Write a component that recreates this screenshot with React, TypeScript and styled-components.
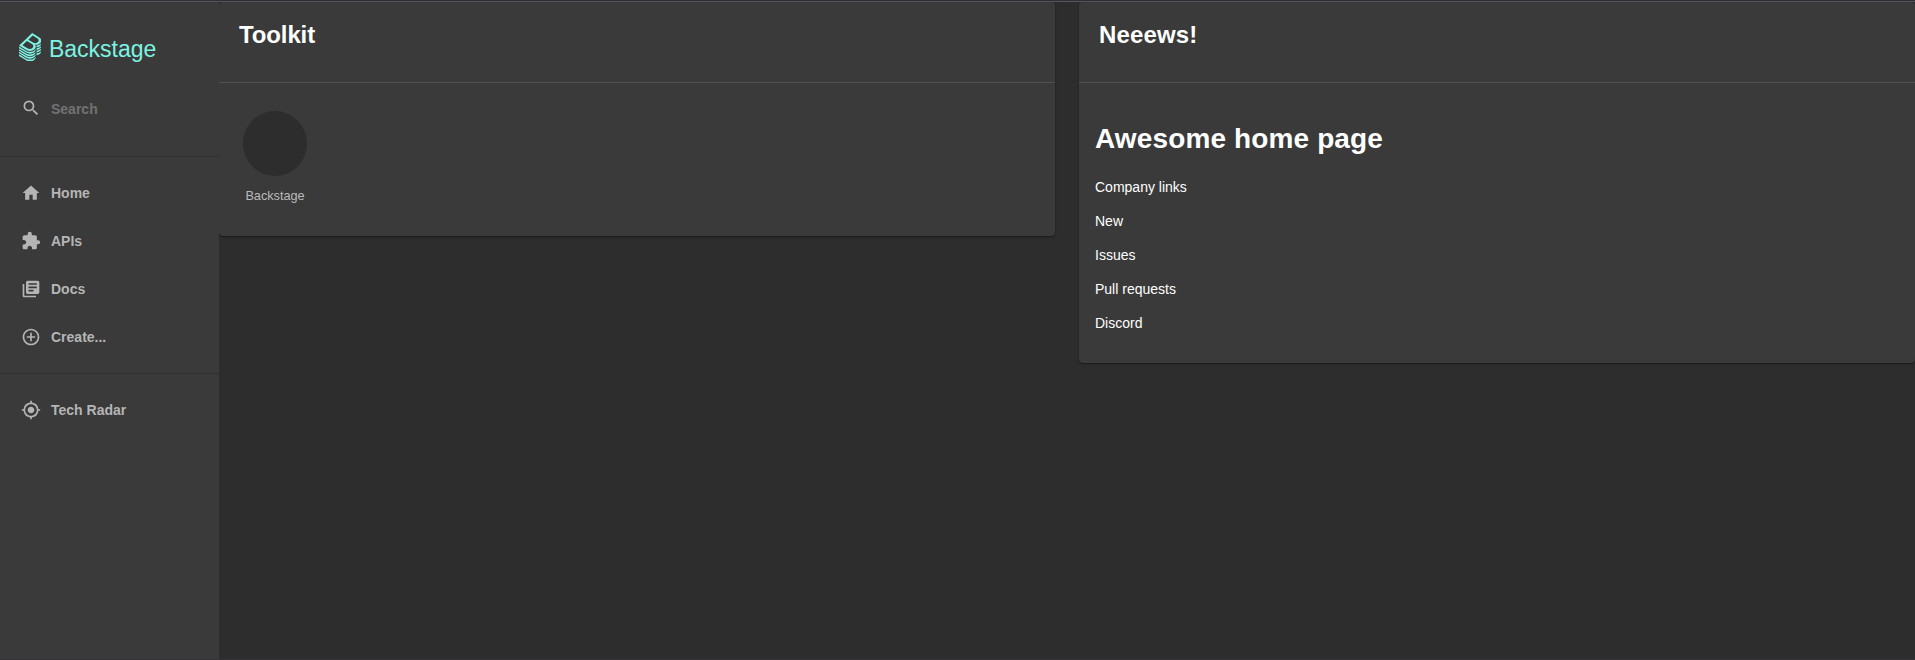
import React from 'react';
import styled, { createGlobalStyle } from 'styled-components';
import {
  MdAddCircleOutline,
  MdExtension,
  MdHome,
  MdLibraryBooks,
  MdMyLocation,
  MdSearch,
} from 'react-icons/md';

const GlobalStyle = createGlobalStyle`
  * { box-sizing: border-box; }
  body {
    margin: 0;
    background: #2d2d2d;
    color: #fff;
    font-family: "Liberation Sans", Arial, Helvetica, sans-serif;
    font-size: 14px;
    overflow: hidden;
  }
`;

const Page = styled.div`
  display: flex;
  height: 660px;
  border-top: 1px solid #302f35;
  border-bottom: 1px solid #383236;
  background: #2d2d2d;
`;

const Frame = styled.div`
  display: flex;
  flex: 1;
  border-top: 1px solid #545459;
`;

const Sidebar = styled.nav`
  display: flex;
  flex-direction: column;
  width: 219px;
  background: #3a3a3a;
  z-index: 1;
`;

const Brand = styled.div`
  display: flex;
  height: 82px;
  padding: 31px 0 0 19px;
  gap: 7.6px;
  color: #7df3e1;
`;

const BrandName = styled.span`
  font-size: 23px;
  line-height: 26px;
  margin-top: 3px;
`;

const NavItem = styled.a<{ $muted?: boolean }>`
  display: flex;
  align-items: center;
  height: 48px;
  padding-left: 21px;
  gap: 10px;
  color: #b5b5b5;
  font-weight: 700;

  span {
    line-height: 20px;
    color: ${({ $muted }) => ($muted ? '#727272' : 'inherit')};
    padding-top: ${({ $muted }) => ($muted ? '2px' : '0')};
  }
`;

const NavRule = styled.hr<{ $top?: number }>`
  width: 100%;
  height: 1px;
  margin: ${({ $top = 12 }) => $top}px 0 12px;
  border: 0;
  background: #303030;
`;

const Content = styled.main`
  display: grid;
  grid-template-columns: 1fr 1fr;
  column-gap: 24px;
  align-items: start;
  flex: 1;
`;

const Card = styled.section<{ $height: number }>`
  height: ${({ $height }) => $height}px;
  border-radius: 4px;
  background: #3a3a3a;
  box-shadow: 0 1px 1px rgba(0, 0, 0, 0.3), 0 1px 3px rgba(0, 0, 0, 0.16);
`;

const CardHeader = styled.header`
  height: 81px;
  padding: 19px 0 0 20px;
  border-bottom: 1px solid #505050;
`;

const CardTitle = styled.h2<{ $tracking: number }>`
  margin: 0;
  font-size: 24px;
  line-height: 28px;
  letter-spacing: ${({ $tracking }) => $tracking}px;
`;

const Tools = styled.div`
  display: flex;
  padding: 28px 0 0 24px;
`;

const Tool = styled.div`
  display: flex;
  flex-direction: column;
  align-items: center;
  width: 64px;
  color: #bababa;
  font-size: 12.7px;
  line-height: 16px;
`;

const ToolCircle = styled.div`
  width: 64px;
  height: 65px;
  margin-bottom: 12px;
  border-radius: 50%;
  background: #2d2d2d;
`;

const News = styled.div`
  padding: 39px 16px 0;
`;

const Headline = styled.h1`
  margin: 0 0 21px;
  font-size: 28px;
  line-height: 34px;
  letter-spacing: 0.13px;
`;

const NewsLine = styled.p`
  margin: 0 0 14px;
  line-height: 20px;
`;

const BackstageIcon = () => (
  <svg width="22.4" height="28.4" viewBox="0 0 337.46 428.5" fill="currentColor">
    <path d="M303,166.05a80.69,80.69,0,0,0,13.45-10.37c.79-.77,1.55-1.53,2.3-2.3a83.12,83.12,0,0,0,7.93-9.38A63.69,63.69,0,0,0,333,133.23a48.58,48.58,0,0,0,4.35-16.4c1.49-19.39-10-38.67-35.62-54.22L198.56,0,78.3,115.23,0,190.25l108.6,65.91a111.59,111.59,0,0,0,57.76,16.41c24.92,0,48.8-8.8,66.42-25.69,19.16-18.36,25.52-42.12,13.7-61.87a49.22,49.22,0,0,0-6.8-8.87A89.17,89.17,0,0,0,259,178.29h.15a85.08,85.08,0,0,0,31-5.79A80.88,80.88,0,0,0,303,166.05ZM202.45,225.86c-19.32,18.51-50.4,21.23-75.7,5.9L51.61,186.15l67.45-64.64,76.41,46.38C223,184.58,221.49,207.61,202.45,225.86Zm8.93-82.22-70.65-42.89L205.14,39,274.51,81.1c25.94,15.72,29.31,37,10.55,55A60.69,60.69,0,0,1,211.38,143.64Zm29.86,190c-19.57,18.75-46.17,29.09-74.88,29.09a123.73,123.73,0,0,1-64.1-18.2L0,282.52v24.67L108.6,373.1a111.6,111.6,0,0,0,57.76,16.42c24.92,0,48.8-8.81,66.42-25.69,12.88-12.34,20-27.13,19.68-41.49v-1.79A87.27,87.27,0,0,1,241.24,333.68Zm0-39c-19.57,18.75-46.17,29.08-74.88,29.08a123.81,123.81,0,0,1-64.1-18.19L0,243.53v24.68l108.6,65.91a111.6,111.6,0,0,0,57.76,16.42c24.92,0,48.8-8.81,66.42-25.69,12.88-12.34,20-27.13,19.68-41.5v-1.78A87.27,87.27,0,0,1,241.24,294.7Zm0-39c-19.57,18.76-46.17,29.09-74.88,29.09a123.81,123.81,0,0,1-64.1-18.19L0,204.55v24.68l108.6,65.91a111.59,111.59,0,0,0,57.76,16.41c24.92,0,48.8-8.8,66.42-25.68,12.88-12.35,20-27.13,19.68-41.5v-1.82A86.09,86.09,0,0,1,241.24,255.71Zm83.7,25.74a94.15,94.15,0,0,1-60.2,25.86h0V334a81.6,81.6,0,0,0,51.74-22.37c14-13.38,21.14-28.11,21-42.64v-2.19A94.92,94.92,0,0,1,324.94,281.45Zm-83.7,91.21c-19.57,18.76-46.17,29.09-74.88,29.09a123.73,123.73,0,0,1-64.1-18.2L0,321.5v24.68l108.6,65.9a111.6,111.6,0,0,0,57.76,16.42c24.92,0,48.8-8.8,66.42-25.69,12.88-12.34,20-27.13,19.68-41.49v-1.79A86.29,86.29,0,0,1,241.24,372.66ZM327,162.45c-.68.69-1.35,1.38-2.05,2.06a94.37,94.37,0,0,1-10.64,8.65,91.35,91.35,0,0,1-11.6,7,94.53,94.53,0,0,1-26.24,8.71,97.69,97.69,0,0,1-14.16,1.57c.5,1.61.9,3.25,1.25,4.9a53.27,53.27,0,0,1,1.14,12V217h.05a84.41,84.41,0,0,0,25.35-5.55,81,81,0,0,0,26.39-16.82c.8-.77,1.5-1.56,2.26-2.34a82.08,82.08,0,0,0,7.93-9.38A63.76,63.76,0,0,0,333,172.17a48.55,48.55,0,0,0,4.32-16.45c.09-1.23.2-2.47.19-3.7V150q-1.08,1.54-2.25,3.09A96.73,96.73,0,0,1,327,162.45Zm0,77.92c-.69.7-1.31,1.41-2,2.1a94.2,94.2,0,0,1-60.2,25.86h0l0,26.67h0a81.6,81.6,0,0,0,51.74-22.37A73.51,73.51,0,0,0,333,250.13a48.56,48.56,0,0,0,4.32-16.44c.09-1.24.2-2.47.19-3.71v-2.19c-.74,1.07-1.46,2.15-2.27,3.21A95.68,95.68,0,0,1,327,240.37Zm0-39c-.69.7-1.31,1.41-2,2.1a93.18,93.18,0,0,1-10.63,8.65,91.63,91.63,0,0,1-11.63,7,95.47,95.47,0,0,1-37.94,10.18h0V256h0a81.65,81.65,0,0,0,51.74-22.37c.8-.77,1.5-1.56,2.26-2.34a82.08,82.08,0,0,0,7.93-9.38A63.76,63.76,0,0,0,333,211.15a48.56,48.56,0,0,0,4.32-16.44c.09-1.24.2-2.48.19-3.71v-2.2c-.74,1.08-1.46,2.16-2.27,3.22A95.68,95.68,0,0,1,327,201.39Z" />
  </svg>
);

const mainLinks = [
  { label: 'Home', Icon: MdHome },
  { label: 'APIs', Icon: MdExtension },
  { label: 'Docs', Icon: MdLibraryBooks },
  { label: 'Create...', Icon: MdAddCircleOutline },
];

const newsLines = ['Company links', 'New', 'Issues', 'Pull requests', 'Discord'];

export default function App() {
  return (
    <>
      <GlobalStyle />
      <Page>
        <Frame>
          <Sidebar>
            <Brand>
              <BackstageIcon />
              <BrandName>Backstage</BrandName>
            </Brand>
            <NavItem $muted>
              <MdSearch size={20} />
              <span>Search</span>
            </NavItem>
            <NavRule $top={24} />
            {mainLinks.map(({ label, Icon }) => (
              <NavItem key={label}>
                <Icon size={20} />
                <span>{label}</span>
              </NavItem>
            ))}
            <NavRule />
            <NavItem>
              <MdMyLocation size={20} />
              <span>Tech Radar</span>
            </NavItem>
          </Sidebar>
          <Content>
            <Card $height={234}>
              <CardHeader>
                <CardTitle $tracking={-0.12}>Toolkit</CardTitle>
              </CardHeader>
              <Tools>
                <Tool>
                  <ToolCircle />
                  Backstage
                </Tool>
              </Tools>
            </Card>
            <Card $height={361}>
              <CardHeader>
                <CardTitle $tracking={0.14}>Neeews!</CardTitle>
              </CardHeader>
              <News>
                <Headline>Awesome home page</Headline>
                {newsLines.map((line) => (
                  <NewsLine key={line}>{line}</NewsLine>
                ))}
              </News>
            </Card>
          </Content>
        </Frame>
      </Page>
    </>
  );
}
